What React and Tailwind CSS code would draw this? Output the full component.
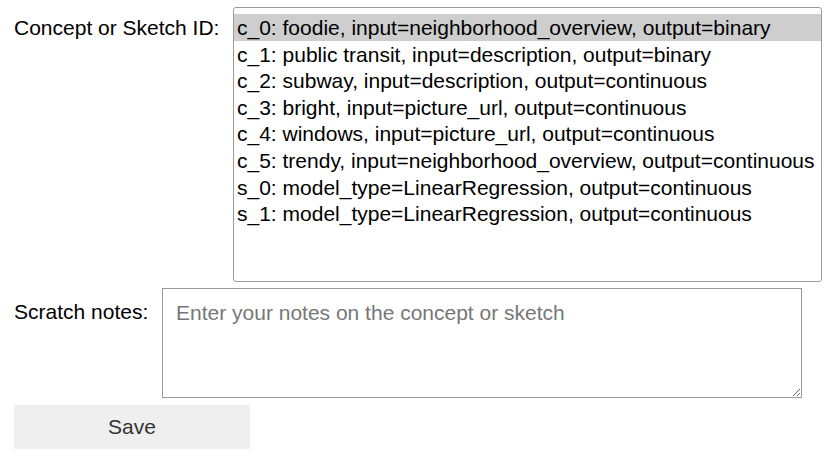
import React from "react";

const options = [
  "c_0: foodie, input=neighborhood_overview, output=binary",
  "c_1: public transit, input=description, output=binary",
  "c_2: subway, input=description, output=continuous",
  "c_3: bright, input=picture_url, output=continuous",
  "c_4: windows, input=picture_url, output=continuous",
  "c_5: trendy, input=neighborhood_overview, output=continuous",
  "s_0: model_type=LinearRegression, output=continuous",
  "s_1: model_type=LinearRegression, output=continuous",
];

export default function App() {
  return (
    <div className="min-h-screen bg-white pl-[14px] pt-[7px] text-[21px] text-black font-['Liberation_Sans',Arial,sans-serif]">
      <div className="flex items-start">
        <div className="w-[219px] shrink-0 pt-[8px] leading-[26px]">Concept or Sketch ID:</div>
        <div className="w-[589px] h-[275px] border border-[#9a9a9a] rounded-[3px] pt-[6px] overflow-hidden">
          {options.map((opt, i) => (
            <div
              key={opt}
              className={`h-[26.6px] leading-[27px] pl-[3px] whitespace-nowrap ${i === 0 ? "bg-[#cecece]" : ""}`}
            >
              {opt}
            </div>
          ))}
        </div>
      </div>

      <div className="flex items-start mt-[6px]">
        <div className="w-[148px] shrink-0 pt-[11px] leading-[26px]">Scratch notes:</div>
        <textarea
          className="w-[640px] h-[110px] border border-[#9a9a9a] px-[13px] pt-[11px] leading-[26px] text-[21px] placeholder:text-[#777] outline-none"
          placeholder="Enter your notes on the concept or sketch"
        />
      </div>

      <button className="mt-[7px] w-[236px] h-[44px] bg-[#efefef] text-[#333] text-[21px] flex items-center justify-center">
        Save
      </button>
    </div>
  );
}
